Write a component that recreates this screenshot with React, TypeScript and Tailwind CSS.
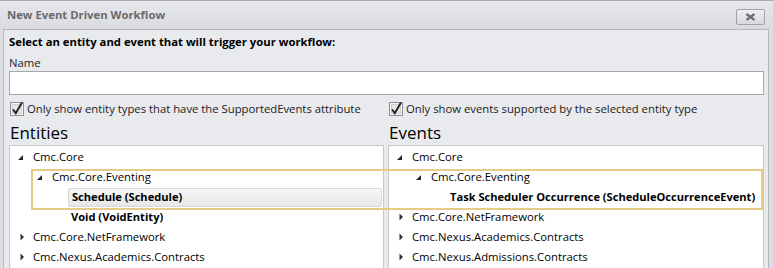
const font = { fontFamily: '"Open Sans", "Noto Sans", sans-serif' };

type Row = { label: string; level: number; state: "open" | "closed" | "leaf"; bold?: boolean; selected?: boolean };

const entities: Row[] = [
  { label: "Cmc.Core", level: 0, state: "open" },
  { label: "Cmc.Core.Eventing", level: 1, state: "open" },
  { label: "Schedule (Schedule)", level: 2, state: "leaf", bold: true, selected: true },
  { label: "Void (VoidEntity)", level: 2, state: "leaf", bold: true },
  { label: "Cmc.Core.NetFramework", level: 0, state: "closed" },
  { label: "Cmc.Nexus.Academics.Contracts", level: 0, state: "closed" },
];

const events: Row[] = [
  { label: "Cmc.Core", level: 0, state: "open" },
  { label: "Cmc.Core.Eventing", level: 1, state: "open" },
  { label: "Task Scheduler Occurrence (ScheduleOccurrenceEvent)", level: 2, state: "leaf", bold: true },
  { label: "Cmc.Core.NetFramework", level: 0, state: "closed" },
  { label: "Cmc.Nexus.Academics.Contracts", level: 0, state: "closed" },
  { label: "Cmc.Nexus.Admissions.Contracts", level: 0, state: "closed" },
];

function Toggle({ state }: { state: Row["state"] }) {
  return (
    <span className="w-[15px] h-[20px] flex items-center shrink-0">
      {state === "open" && (
        <svg width="6" height="6" viewBox="0 0 6 6" className="mt-[1px]">
          <polygon points="5,0 5,5 0,5" fill="#262626" />
        </svg>
      )}
      {state === "closed" && (
        <svg width="5" height="8" viewBox="0 0 5 8" className="ml-[2px]">
          <polygon points="0.5,0.5 4,4 0.5,7.5" fill="#333" />
        </svg>
      )}
    </span>
  );
}

function Tree({ rows }: { rows: Row[] }) {
  return (
    <div className="h-[140px] bg-white border border-[#c6c7cb] pt-[1px]">
      {rows.map((r, i) => (
        <div key={i} className="h-[20px] flex items-center" style={{ paddingLeft: 8 + r.level * 19 }}>
          <Toggle state={r.state} />
          {r.selected ? (
            <div className="flex-1 h-[19px] -ml-[3px] mr-[1px] pl-[3px] flex items-center rounded-[2px] border border-[#d8d8d8] bg-gradient-to-b from-[#f6f6f6] to-[#e7e7e7] font-bold text-[11.1px] text-black">
              {r.label}
            </div>
          ) : (
            <span className={r.bold ? "font-bold text-[11.1px] text-black whitespace-nowrap" : "text-black whitespace-nowrap"}>{r.label}</span>
          )}
        </div>
      ))}
    </div>
  );
}

function CheckBox() {
  return (
    <svg width="14" height="14" viewBox="0 0 14 14" className="shrink-0 overflow-visible">
      <rect x="0.5" y="0.5" width="13" height="13" fill="#f7f7f7" stroke="#8e8f8f" />
      <rect x="2.5" y="2.5" width="9" height="9" fill="#e6e7e9" stroke="#cfd0d2" />
      <path d="M3 7.5 L5.8 11.2 L12 0.5" fill="none" stroke="#262626" strokeWidth="2" />
    </svg>
  );
}

export default function App() {
  return (
    <div className="relative w-[773px] h-[268px] overflow-hidden bg-[#dddee3] border-t border-[#a9aab4] text-[11.3px] text-[#1a1a1a]" style={font}>
      <div className="h-[28px] flex items-center justify-between pl-[7px] pr-[8px] bg-gradient-to-b from-[#e7e8ec] to-[#dadbe0]">
        <span className="font-bold text-[#6a6a6a]">New Event Driven Workflow</span>
        <div className="w-[29px] h-[16px] mt-[4px] rounded-[2px] border border-[#a3a4a8] bg-gradient-to-b from-[#eeeff2] to-[#d9dadf] flex items-center justify-center">
          <svg width="11" height="8" viewBox="0 0 11 8">
            <path d="M1.5 1 L9.5 7 M9.5 1 L1.5 7" stroke="#6d6e72" strokeWidth="2.2" />
          </svg>
        </div>
      </div>

      <div className="ml-[3px] mr-[4px] h-[260px] border border-[#b5b6bd] bg-[#e9eaee] pl-[5px] pr-[4px] pt-[4px]">
        <div className="h-[16px] leading-[16px] font-bold text-black">Select an entity and event that will trigger your workflow:</div>
        <div className="mt-[5px] h-[16px] leading-[16px] text-[#1e1e1e]">Name</div>
        <div className="h-[24px] bg-white border border-[#a6a7ab]" />

        <div className="mt-[6px] grid grid-cols-[379px_376px] h-[16px]">
          <div className="flex items-center gap-[3px] pl-[1px]">
            <CheckBox />
            <span>Only show entity types that have the SupportedEvents attribute</span>
          </div>
          <div className="flex items-center gap-[3px] pl-[1px]">
            <CheckBox />
            <span>Only show events supported by the selected entity type</span>
          </div>
        </div>

        <div className="mt-[4px] grid grid-cols-[375px_376px] gap-x-[4px]">
          <div className="h-[24px] leading-[24px] text-[17px] text-black pl-[1px]">Entities</div>
          <div className="h-[24px] leading-[24px] text-[17px] text-black pl-[1px]">Events</div>
          <Tree rows={entities} />
          <Tree rows={events} />
        </div>
      </div>

      <div className="absolute left-[31px] top-[168px] w-[732px] h-[41px] border-2 border-[#e6cb86] pointer-events-none" />
    </div>
  );
}
